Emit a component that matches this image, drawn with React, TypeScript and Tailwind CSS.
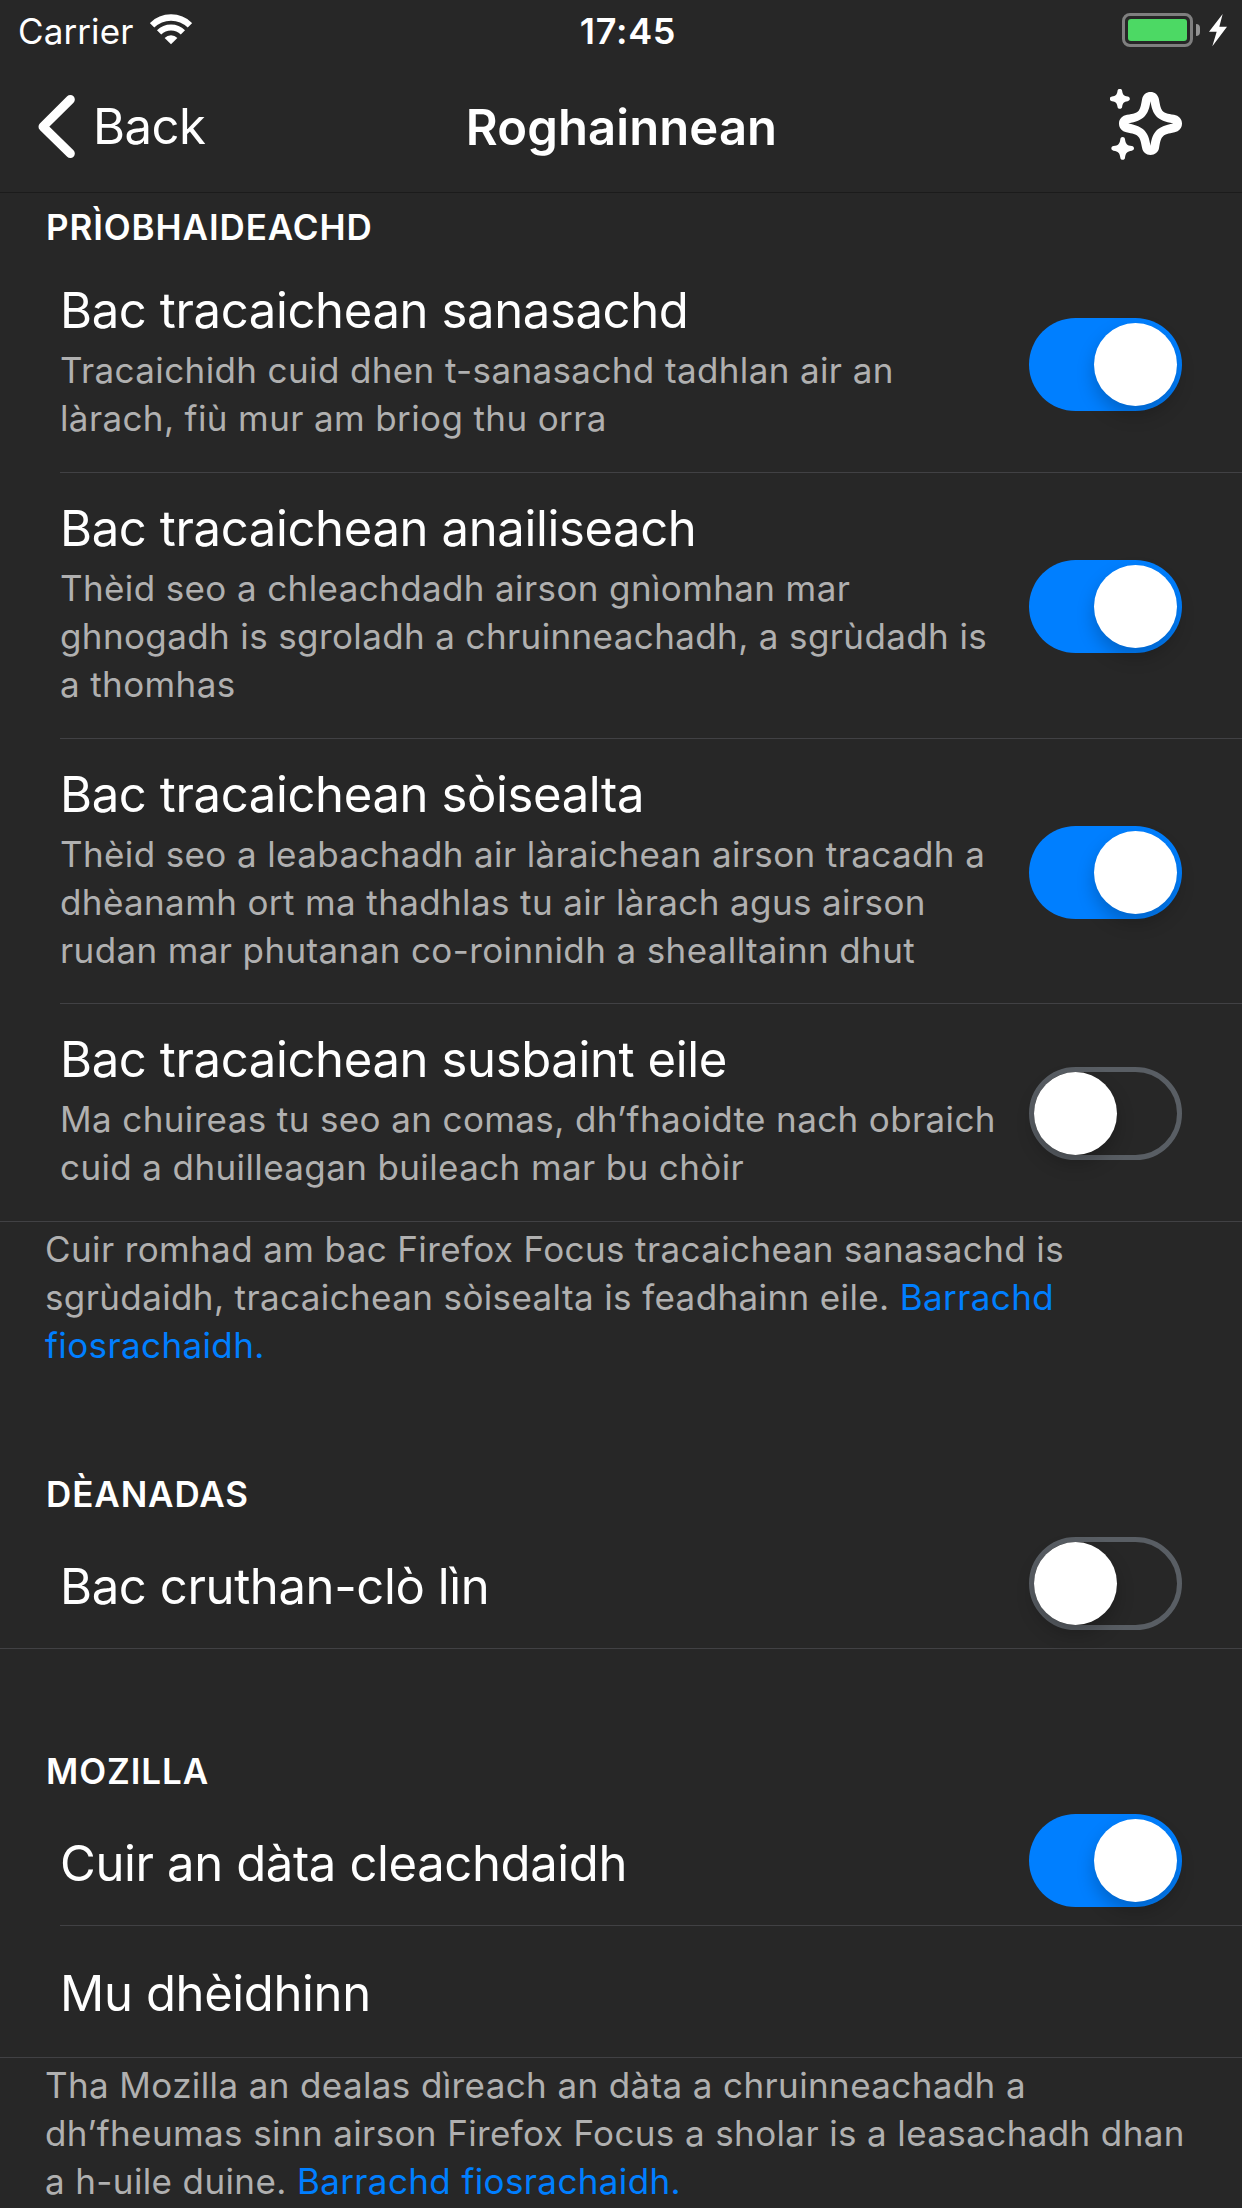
import type { ReactNode } from 'react';

function WifiIcon() {
  return (
    <svg className="h-[31px] w-[42px]" viewBox="0 0 126 93" fill="none" stroke="#fff">
      <path d="M6.1 34.1A80.5 80.5 0 0 1 119.9 34.1" strokeWidth="19" />
      <path d="M27.3 55.3A50.5 50.5 0 0 1 98.7 55.3" strokeWidth="18" />
      <path d="M63 91L43.9 71.9A27 27 0 0 1 82.1 71.9Z" fill="#fff" stroke="none" />
    </svg>
  );
}

function BoltIcon() {
  return (
    <svg className="h-[33px] w-[18px]" viewBox="0 0 54 99" fill="#fff">
      <path d="M41 0L0 53H23L10 97L54 38H31Z" />
    </svg>
  );
}

function BackIcon() {
  return (
    <svg className="h-[63px] w-[37px]" viewBox="0 0 111 189" fill="none" stroke="#fff" strokeWidth="27" strokeLinecap="round" strokeLinejoin="round">
      <path d="M97 13.5L15 95L97 175.5" />
    </svg>
  );
}

function SparkleIcon() {
  return (
    <svg className="h-[72px] w-[73px]" viewBox="0 0 219 216" fill="#fff">
      <path
        fillRule="evenodd"
        d="M121.500 9C134 9 143.500 17 146.500 29C150 46 151 57 157 65C163 72 172 74 192 77.500C206 80 216 90 216 103.500C216 117 207 127 194 130C175 134 165 136 158 143C152 149 150 159 147 178C144.500 190 135 198 121.500 198C108 198 99 190 96.500 178C93 159 91 149 85 143C78 136 68 134 49 130C36 127 27 117 27 103.500C27 90 37 80 51 77.500C71 74 80 72 86 65C92 57 93 46 96.500 29C99.500 17 109 9 121.500 9ZM121.500 37C115.500 78 102 95 55 103.500C102 112 115.500 129 121.500 170C127.500 129 141 112 190 103.500C141 95 127.500 78 121.500 37Z"
      />
      <path d="M29.500 -0.500C33.500 -0.500 36 2 36.500 6C38 17 42 21 53 22.500C57 23 59.500 25.500 59.500 29.500C59.500 33.500 57 36 53 36.500C42 38 38 42 36.500 53C36 57 33.500 59.500 29.500 59.500C25.500 59.500 23 57 22.500 53C21 42 17 38 6 36.500C2 36 -0.500 33.500 -0.500 29.500C-0.500 25.500 2 23 6 22.500C17 21 21 17 22.500 6C23 2 25.500 -0.500 29.500 -0.500Z" />
      <path d="M38 144C42 144 44.500 146.500 45 150.500C47 165 51 169 65.500 171C69.500 171.500 72 174 72 178C72 182 69.500 184.500 65.500 185C51 187 47 191 45 206C44.500 210 42 212.500 38 212.500C34 212.500 31.500 210 31 206C29 191 25 187 10.500 185C6.500 184.500 4 182 4 178C4 174 6.500 171.500 10.500 171C25 169 29 165 31 150.500C31.500 146.500 34 144 38 144Z" />
    </svg>
  );
}

function StatusBar() {
  return (
    <div className="grid h-[60px] grid-cols-3">
      <div className="flex items-start pl-[18px]">
        <span className="mt-[7px] w-[132px] text-[35px] leading-12 tracking-[0.1px]">Carrier</span>
        <span className="mt-[14px]"><WifiIcon /></span>
      </div>
      <div className="mt-[7px] pl-[14px] text-center text-[36px] leading-12 font-semibold tracking-[0.7px]">17:45</div>
      <div className="flex items-start justify-end pt-[13px] pr-[15px]">
        <div className="h-[34px] w-[71px] rounded-[8px] border-3 border-[#7f7f7f] p-[3px]">
          <div className="h-[22px] w-[59px] rounded-[3px] bg-[#4cd964]" />
        </div>
        <div className="mt-[11px] ml-[3px] h-3 w-1 rounded-r-full bg-[#939393]" />
        <div className="mt-px ml-[9px]"><BoltIcon /></div>
      </div>
    </div>
  );
}

function NavBar() {
  return (
    <div className="grid h-[133px] grid-cols-3 border-b border-[#1b1b1b]">
      <div className="flex items-start pl-[38px]">
        <span className="mt-[35px]"><BackIcon /></span>
        <span className="mt-[37px] ml-[18px] text-[49px] leading-[60px] tracking-[-0.5px]">Back</span>
      </div>
      <div className="mt-[38px] pl-px text-center text-[49px] leading-[60px] font-semibold tracking-[0.1px]">Roghainnean</div>
      <div className="flex items-start justify-end pt-[29px] pr-[59px]"><SparkleIcon /></div>
    </div>
  );
}

function Toggle({ on }: { on: boolean }) {
  return (
    <div
      role="switch"
      aria-checked={on}
      className={`flex h-[93px] w-[153px] shrink-0 items-center rounded-full ${
        on ? 'justify-end bg-[#007fff] pr-[5px]' : 'border-5 border-[#595e64]'
      }`}
    >
      <div className="size-[83px] shrink-0 rounded-full bg-white shadow-[0_9px_18px_rgba(0,0,0,0.22)]" />
    </div>
  );
}

function Header({ children }: { children: ReactNode }) {
  return <h2 className="pl-[46px] text-[35px] leading-12 font-semibold tracking-[0.9px]">{children}</h2>;
}

function Title({ children }: { children: ReactNode }) {
  return <div className="text-[49px] leading-[60px] tracking-[-0.37px] whitespace-nowrap">{children}</div>;
}

function Lines({ lines }: { lines: ReactNode[] }) {
  return (
    <div className="text-[35px] leading-12 tracking-[0.38px] whitespace-nowrap text-[#b0b0b0]">
      {lines.map((line, i) => (
        <div key={i}>{line}</div>
      ))}
    </div>
  );
}

function Link({ children }: { children: ReactNode }) {
  return <a className="text-[#007fff]">{children}</a>;
}

type Tracker = { title: string; lines: string[]; on: boolean; row: string };

const trackers: Tracker[] = [
  {
    title: 'Bac tracaichean sanasachd',
    lines: ['Tracaichidh cuid dhen t-sanasachd tadhlan air an', 'làrach, fiù mur am briog thu orra'],
    on: true,
    row: 'ml-[60px] h-[218px]',
  },
  {
    title: 'Bac tracaichean anailiseach',
    lines: [
      'Thèid seo a chleachdadh airson gnìomhan mar',
      'ghnogadh is sgroladh a chruinneachadh, a sgrùdadh is',
      'a thomhas',
    ],
    on: true,
    row: 'ml-[60px] h-[266px]',
  },
  {
    title: 'Bac tracaichean sòisealta',
    lines: [
      'Thèid seo a leabachadh air làraichean airson tracadh a',
      'dhèanamh ort ma thadhlas tu air làrach agus airson',
      'rudan mar phutanan co-roinnidh a shealltainn dhut',
    ],
    on: true,
    row: 'ml-[60px] h-[265px]',
  },
  {
    title: 'Bac tracaichean susbaint eile',
    lines: ['Ma chuireas tu seo an comas, dh’fhaoidte nach obraich', 'cuid a dhuilleagan buileach mar bu chòir'],
    on: false,
    row: 'pl-[60px] h-[218px]',
  },
];

export default function App() {
  return (
    <div className="flex h-[2208px] w-[1242px] flex-col overflow-hidden bg-[#272727] font-['Inter',sans-serif] text-white">
      <StatusBar />
      <NavBar />

      <section className="pt-[10px]">
        <Header>PRÌOBHAIDEACHD</Header>
        <div className="mt-1">
          {trackers.map((t) => (
            <div key={t.title} className={`flex items-center justify-between border-b border-[#414144] pr-[60px] ${t.row}`}>
              <div className="flex w-0 flex-col gap-[5px] self-start pt-[26px]">
                <Title>{t.title}</Title>
                <Lines lines={t.lines} />
              </div>
              <div className="pt-[2px]"><Toggle on={t.on} /></div>
            </div>
          ))}
        </div>
        <div className="pt-[3px] pl-[45px]">
          <Lines
            lines={[
              'Cuir romhad am bac Firefox Focus tracaichean sanasachd is',
              <>sgrùdaidh, tracaichean sòisealta is feadhainn eile. <Link>Barrachd</Link></>,
              <Link>fiosrachaidh.</Link>,
            ]}
          />
        </div>
      </section>

      <section className="mt-[101px]">
        <Header>DÈANADAS</Header>
        <div className="flex h-[131px] items-start justify-between border-b border-[#414144] pr-[60px] pl-[60px]">
          <div className="pt-[39px]"><Title>Bac cruthan-clò lìn</Title></div>
          <div className="pt-[19px]"><Toggle on={false} /></div>
        </div>
      </section>

      <section className="mt-[98px]">
        <Header>MOZILLA</Header>
        <div className="ml-[60px] flex h-[131px] items-start justify-between border-b border-[#414144] pr-[60px]">
          <div className="pt-[39px]"><Title>Cuir an dàta cleachdaidh</Title></div>
          <div className="pt-[19px]"><Toggle on /></div>
        </div>
        <div className="flex h-[132px] items-start border-b border-[#414144] pt-[38px] pl-[60px]">
          <Title>Mu dhèidhinn</Title>
        </div>
        <div className="pt-[3px] pl-[45px]">
          <Lines
            lines={[
              'Tha Mozilla an dealas dìreach an dàta a chruinneachadh a',
              'dh’fheumas sinn airson Firefox Focus a sholar is a leasachadh dhan',
              <>a h-uile duine. <Link>Barrachd fiosrachaidh.</Link></>,
            ]}
          />
        </div>
      </section>
    </div>
  );
}
